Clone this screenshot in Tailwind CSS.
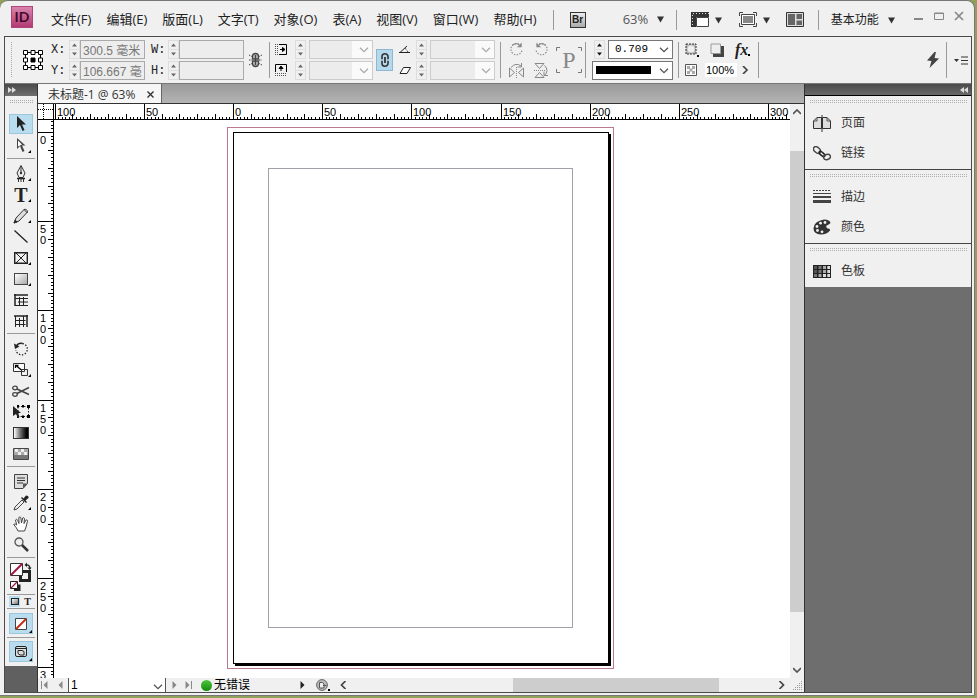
<!DOCTYPE html>
<html lang="zh-CN">
  <head>
    <meta charset="UTF-8" />
    <meta name="viewport" content="width=device-width, initial-scale=1.0" />
    <title>未标题-1 @ 63%</title>
    <script src="https://cdn.jsdelivr.net/npm/@tailwindcss/browser@4"></script>
  </head>
  <body class="h-screen overflow-hidden bg-[#8fa257] pr-0.5 pb-0.5 font-['Liberation_Sans','Noto_Sans_CJK_SC',sans-serif] text-xs text-[#222]">

    <!-- shared glyphs -->
    <svg class="hidden">
      <symbol id="tri-down" viewBox="0 0 8 8"><path d="M0 1h8L4 8z" fill="currentColor" /></symbol>
      <symbol id="chevron" viewBox="0 0 10 6"><path d="M1 .7l4 4 4-4" fill="none" stroke="currentColor" stroke-width="1.3" /></symbol>
      <symbol id="corner" viewBox="0 0 4 4"><path d="M4 0v4H0z" fill="#000" /></symbol>
      <symbol id="rotate" viewBox="0 0 16 16">
        <path d="M10.5 2.2A6 6 0 1 0 14 8" fill="none" stroke="currentColor" stroke-width="1.2" stroke-dasharray="1.5 1.5" />
        <path d="M4 3.3A6 6 0 0 1 11 3" fill="none" stroke="currentColor" stroke-width="1.2" />
        <path d="M13.5.5v5h-5z" fill="currentColor" />
      </symbol>
    </svg>

    <div class="flex h-full flex-col rounded-t-lg border-t border-r border-b border-[#777] bg-[#f0f0f0] pr-0.5 pb-0.5 pl-1">

      <!-- menu bar -->
      <header class="flex h-[35px] shrink-0 items-center pt-0.5 pl-[7px] font-['Open_Sans','Noto_Sans_CJK_SC',sans-serif]">
        <div class="mb-1.5 flex h-[22px] w-[22px] items-center justify-center border border-[#b0457c] bg-linear-to-b from-[#d884ac] to-[#b23a74] font-['Lato',sans-serif] text-sm font-bold text-[#45082a]">ID</div>
        <nav class="ml-[18px] flex gap-[15px] pt-px text-[13px] whitespace-nowrap">
          <button>文件(F)</button>
          <button>编辑(E)</button>
          <button>版面(L)</button>
          <button>文字(T)</button>
          <button>对象(O)</button>
          <button>表(A)</button>
          <button>视图(V)</button>
          <button>窗口(W)</button>
          <button>帮助(H)</button>
        </nav>
        <div class="ml-4 h-5 w-px bg-[#999]"></div>
        <button class="ml-4 h-4 w-4 border border-[#333] bg-linear-to-b from-[#eee] to-[#aaa] font-['Liberation_Sans',sans-serif] text-[10px] leading-3 font-bold" aria-label="Bridge">Br</button>
        <label class="relative ml-[37px] flex items-center text-[#555]">
          <select aria-label="缩放" class="w-[41px] appearance-none text-[13px]"><option>63%</option></select>
          <svg class="pointer-events-none absolute right-0 h-2 w-[7px] text-[#333]"><use href="#tri-down" /></svg>
        </label>
        <div class="ml-3 h-5 w-px bg-[#999]"></div>
        <button class="ml-3.5 flex items-center gap-1.5 text-[#333]" aria-label="视图选项">
          <svg width="18" height="15" viewBox="0 0 18 15"><path d="M0 0h18v5H5v10H0z" fill="#333" /><path d="M5.500 5.500h12v9h-12z" fill="#fff" stroke="#444" /><path d="M2 1.500h16M1.500 3v12" stroke="#ddd" stroke-dasharray="1 2" /></svg>
          <svg class="h-2 w-[7px]"><use href="#tri-down" /></svg>
        </button>
        <button class="ml-[17px] flex items-center gap-1.5 text-[#333]" aria-label="屏幕模式">
          <svg width="18" height="15" viewBox="0 0 18 15" fill="none" stroke="#444"><path d="M.5 4V.5H4M14 .5h3.500V4M17.500 11v3.500H14M4 14.500H.5V11" /><path d="M2.500 2.500h13v10h-13z" fill="#fff" /><path d="M4 4h10v7H4z" fill="#888" stroke="none" /></svg>
          <svg class="h-2 w-[7px]"><use href="#tri-down" /></svg>
        </button>
        <button class="ml-4" aria-label="排列文档">
          <svg width="18" height="15" viewBox="0 0 18 15"><path d="M.5.500h17v14H.5z" fill="#ddd" stroke="#333" /><path d="M2 2h7v11H2zM10.500 2H16v5h-5.500zM10.500 8.500H16V13h-5.500z" fill="#666" /></svg>
        </button>
        <div class="ml-3.5 h-5 w-px bg-[#999]"></div>
        <label class="relative ml-3 flex items-center">
          <select aria-label="工作区" class="w-16 appearance-none"><option>基本功能</option></select>
          <svg class="pointer-events-none absolute right-0 h-2 w-[7px] text-[#333]"><use href="#tri-down" /></svg>
        </label>
        <div class="mr-2 mb-2 ml-auto flex items-center gap-2.5">
          <button aria-label="最小化"><svg width="10" height="10"><path d="M0 8h9" stroke="#888" stroke-width="2" /></svg></button>
          <button aria-label="最大化"><svg width="10" height="10"><path d="M.5 2h9v6.500h-9zM0 2.500h10" fill="none" stroke="#888" /></svg></button>
          <button aria-label="关闭"><svg width="10" height="10"><path d="M1 1l8 8M9 1L1 9" stroke="#888" stroke-width="1.700" /></svg></button>
        </div>
      </header>

      <div class="flex min-h-0 flex-1 flex-col border border-[#4a4a4a]">

        <!-- control panel -->
        <section class="flex h-[47px] shrink-0 items-center border-b border-[#777] pl-[5px]">
          <div class="h-9 w-[3px] bg-[conic-gradient(#aaa_25%,transparent_0)] bg-[length:2px_2px]"></div>
          <svg class="ml-2.5 shrink-0" width="20" height="20" viewBox="0 0 20 20" fill="#fff" stroke="#000">
            <path d="M2.500 2.500h15v15h-15z" />
            <path d="M.5.500h4v4h-4zM8 .5h4v4H8zM15.500.500h4v4h-4zM.5 8h4v4h-4zM15.500 8h4v4h-4zM.5 15.500h4v4h-4zM8 15.500h4v4H8zM15.500 15.500h4v4h-4z" />
            <path d="M8 8h4v4H8z" fill="#000" />
          </svg>

          <div class="ml-2 grid grid-cols-[18px_auto_auto] items-center gap-y-0.5">
            <label for="pos-x" class="font-['Liberation_Mono',monospace]">X:</label>
            <span data-spin="#666"></span>
            <input id="pos-x" value="300.5 毫米" disabled class="h-[19px] w-[65px] border border-[#aaa] bg-[#ededed] pl-0.5 text-[#777]" />
            <label for="pos-y" class="font-['Liberation_Mono',monospace]">Y:</label>
            <span data-spin="#666"></span>
            <input id="pos-y" value="106.667 毫" disabled class="h-[19px] w-[65px] border border-[#aaa] bg-[#ededed] pl-0.5 text-[#777]" />
          </div>
          <div class="ml-1.5 grid grid-cols-[17px_auto_auto] items-center gap-y-0.5">
            <label for="size-w" class="font-['Liberation_Mono',monospace]">W:</label>
            <span data-spin="#666"></span>
            <input id="size-w" disabled class="h-[19px] w-[65px] border border-[#aaa] bg-[#ededed]" />
            <label for="size-h" class="font-['Liberation_Mono',monospace]">H:</label>
            <span data-spin="#666"></span>
            <input id="size-h" disabled class="h-[19px] w-[65px] border border-[#aaa] bg-[#ededed]" />
          </div>
          <button class="ml-[5px]" aria-label="约束宽高比例">
            <svg width="13" height="16" viewBox="0 0 13 16" fill="none" stroke="#444"><path d="M3.500 7V4.500a3 3 0 0 1 6 0V7zM3.500 9v2.500a3 3 0 0 0 6 0V9z" fill="#bbb" stroke-width="1.300" /><path d="M6.500 3v10" stroke-width="1.300" /><path d="M0 3l3 1.500M13 3l-3 1.500M0 8h3M10 8h3M0 13l3-1.500M13 13l-3-1.500" stroke-dasharray="1.500 1" /></svg>
          </button>
          <div class="ml-[7px] h-9 w-px bg-[#999]"></div>

          <div class="ml-1 flex flex-col gap-2">
            <svg width="14" height="13" viewBox="0 0 14 13" fill="none" stroke="#000"><path d="M5 1.500h7.500v10H5M6 6.500h3" /><path d="M8.500 4.500l2.500 2-2.500 2z" fill="#000" /><path d="M1.500 1v11M3.500 1v11" stroke="#555" stroke-dasharray="1 1" /></svg>
            <svg width="14" height="13" viewBox="0 0 14 13" fill="none" stroke="#000"><path d="M1.500 8V.500h11V8M7 7V3" /><path d="M5 4.500L7 2l2 2.500z" fill="#000" /><path d="M1 9.500h12M1 11.500h12" stroke="#555" stroke-dasharray="1 1" /></svg>
          </div>
          <div class="ml-[7px] grid grid-cols-[auto_auto] items-center gap-x-[3px] gap-y-0.5">
            <span data-spin="#666"></span>
            <label class="relative text-[#aaa]"><select disabled aria-label="X 缩放" class="block h-[19px] w-[64px] appearance-none border border-[#ccc] bg-[linear-gradient(90deg,#ececec_42px,#fafafa_42px)] opacity-100"></select><svg class="pointer-events-none absolute top-[7px] right-1 h-1.5 w-2.5"><use href="#chevron" /></svg></label>
            <span data-spin="#666"></span>
            <label class="relative text-[#aaa]"><select disabled aria-label="Y 缩放" class="block h-[19px] w-[64px] appearance-none border border-[#ccc] bg-[linear-gradient(90deg,#ececec_42px,#fafafa_42px)] opacity-100"></select><svg class="pointer-events-none absolute top-[7px] right-1 h-1.5 w-2.5"><use href="#chevron" /></svg></label>
          </div>
          <button class="ml-[3px] flex h-[22px] w-[17px] items-center justify-center border border-[#8fb9d2] bg-[#b5d8ec]" aria-label="约束缩放比例">
            <svg width="8" height="14" viewBox="0 0 8 14" fill="none" stroke="#333"><path d="M1 6.300V3.500a3 2.700 0 0 1 6 0v2.800M1 7.700v2.800a3 2.700 0 0 0 6 0V7.700" stroke-width="1.600" /><path d="M4 4v6" stroke-width="1.800" /></svg>
          </button>
          <div class="ml-1.5 flex flex-col gap-3 text-[#222]">
            <svg width="11" height="9" viewBox="0 0 11 9" fill="none" stroke="#222"><path d="M1 7.500L8 1M0 7.500h11" /><path d="M6 3l3 4" stroke-dasharray="1 1" /></svg>
            <svg width="12" height="9" viewBox="0 0 12 9"><path d="M1 7.500L4.500 1.500h7L8 7.500z" fill="#fff" stroke="#222" /></svg>
          </div>
          <div class="ml-[5px] grid grid-cols-[auto_auto] items-center gap-x-[3px] gap-y-0.5">
            <span data-spin="#666"></span>
            <label class="relative text-[#aaa]"><select disabled aria-label="旋转角度" class="block h-[19px] w-[65px] appearance-none border border-[#ccc] bg-[linear-gradient(90deg,#ececec_44px,#fafafa_44px)] opacity-100"></select><svg class="pointer-events-none absolute top-[7px] right-1 h-1.5 w-2.5"><use href="#chevron" /></svg></label>
            <span data-spin="#666"></span>
            <label class="relative text-[#aaa]"><select disabled aria-label="切变角度" class="block h-[19px] w-[65px] appearance-none border border-[#ccc] bg-[linear-gradient(90deg,#ececec_44px,#fafafa_44px)] opacity-100"></select><svg class="pointer-events-none absolute top-[7px] right-1 h-1.5 w-2.5"><use href="#chevron" /></svg></label>
          </div>
          <div class="ml-[5px] h-9 w-px bg-[#999]"></div>

          <div class="ml-2 grid grid-cols-2 gap-x-2.5 gap-y-1.5 text-[#888]">
            <button aria-label="顺时针旋转"><svg class="h-[15px] w-[15px]"><use href="#rotate" /></svg></button>
            <button aria-label="逆时针旋转"><svg class="h-[15px] w-[15px] -scale-x-100"><use href="#rotate" /></svg></button>
            <button aria-label="水平翻转"><svg width="15" height="15" viewBox="0 0 15 15" fill="none" stroke="#888"><path d="M.5 5v9l5-4.500zM14.500 5v9l-5-4.500z" /><path d="M7.500 4v11" stroke-dasharray="1 1" /><path d="M2 4.500Q7-1 12 3M12.500 0v4h-4" /></svg></button>
            <button aria-label="垂直翻转"><svg width="15" height="15" viewBox="0 0 15 15" fill="none" stroke="#888"><path d="M1 .5h9L5.500 5.500zM1 14.500h9l-4.500-5z" /><path d="M0 7.500h11" stroke-dasharray="1 1" /><path d="M10.500 2.500q5 5 0 10M14 12.500h-4v-4" /></svg></button>
          </div>
          <div class="relative ml-[7px] flex h-[26px] w-[26px] items-center justify-center font-['Liberation_Serif',serif] text-2xl text-[#888]">
            P
            <svg class="absolute inset-0" width="26" height="26" fill="none" stroke="#777"><path d="M.5 4V.5H4M22 .5h3.500V4M25.500 22v3.500H22M4 25.500H.5V22" /></svg>
          </div>
          <div class="ml-[3px] h-9 w-px bg-[#999]"></div>

          <div class="ml-1.5 flex flex-col gap-0.5">
            <div class="flex justify-between gap-[3px] pl-0.5">
              <span data-spin="#111"></span>
              <label class="relative text-[#555]"><select aria-label="描边粗细" class="block h-[19px] w-[65px] appearance-none border border-[#777] bg-white pl-1.5 font-['Liberation_Mono',monospace] text-[11px] text-black"><option>0.709</option></select><svg class="pointer-events-none absolute top-[7px] right-1 h-1.5 w-2.5"><use href="#chevron" /></svg></label>
            </div>
            <label class="relative text-[#555]">
              <select aria-label="描边样式" class="block h-[19px] w-[81px] appearance-none border border-[#777] bg-white"></select>
              <span class="pointer-events-none absolute top-[5px] left-1 h-2 w-[55px] bg-black"></span>
              <svg class="pointer-events-none absolute top-[7px] right-1 h-1.5 w-2.5"><use href="#chevron" /></svg>
            </label>
          </div>
          <div class="ml-[5px] h-9 w-px bg-[#999]"></div>

          <div class="ml-1.5 flex flex-col gap-1">
            <div class="flex h-4 items-center gap-[11px]">
              <button aria-label="对象样式"><svg width="14" height="14" viewBox="0 0 14 14"><path d="M1 1h10v10H1z" fill="#bbb" stroke="#333" stroke-dasharray="2 1" /><circle cx="6" cy="6" r="3.500" fill="#eee" /><path d="M12 12h2v2h-2z" /></svg></button>
              <button aria-label="投影"><svg width="14" height="14" viewBox="0 0 14 14"><path d="M3 3h11v11H3z" fill="#444" /><path d="M1 1h9.500v9.500H1z" fill="#eee" stroke="#999" /></svg></button>
              <button class="flex items-end font-['Liberation_Serif',serif] text-base leading-4 font-bold italic" aria-label="效果">fx<span class="mb-0.5 h-0.5 w-0.5 bg-black"></span></button>
            </div>
            <div class="flex h-4 items-center">
              <svg width="12" height="12" viewBox="0 0 12 12"><path d="M.5.500h11v11H.5z" fill="#fff" stroke="#555" /><path d="M2 2h3v3H2zM7 2h3v3H7zM4.500 4.500h3v3h-3zM2 7h3v3H2zM7 7h3v3H7z" fill="#aaa" /></svg>
              <input aria-label="不透明度" value="100%" class="ml-2 w-8 bg-white pl-px text-[11px] text-black" />
              <button class="ml-1" aria-label="不透明度选项"><svg width="8" height="8"><path d="M2 0l4 4-4 4" fill="none" stroke="#444" stroke-width="1.700" /></svg></button>
            </div>
          </div>
          <div class="ml-2 h-9 w-px bg-[#999]"></div>

          <div class="mr-[3px] ml-auto flex items-center gap-[7px]">
            <button aria-label="快速应用"><svg width="12" height="16" viewBox="0 0 12 16"><path d="M7.500 0L0 8.500l4.500.5L2.500 16 12 6.500l-4.500-.5L9 0z" fill="#444" /></svg></button>
            <div class="h-9 w-px bg-[#999]"></div>
            <button aria-label="面板菜单"><svg width="14" height="9" viewBox="0 0 14 9"><path d="M0 3h5L2.500 6zM7 .500h7v1H7zM7 4h7v1H7zM7 7.500h7v1H7z" fill="#333" /></svg></button>
          </div>
        </section>

        <main class="flex min-h-0 flex-1">

          <!-- tools -->
          <aside class="flex w-[33px] shrink-0 flex-col border-r border-[#333] bg-[#606060]">
            <div class="flex h-3 shrink-0 items-center bg-linear-to-b from-[#4a4a4a] to-[#707070] pl-[3px]"><svg width="8" height="6"><path d="M0 0l4 3-4 3zM4 0l4 3-4 3z" fill="#ddd" /></svg></div>
            <div class="flex flex-col items-center bg-[#f0f0f0] pt-1 pb-1">
              <div class="mb-2.5 h-1 w-6 bg-[conic-gradient(#aaa_25%,transparent_0)] bg-[length:2px_2px]"></div>

              <button class="relative flex h-5 w-6 items-center justify-center border border-[#9cc6de] bg-[#b9dcef]" aria-label="选择"><svg width="10" height="16" viewBox="0 0 10 16"><path d="M1 0v12l3-3 2.500 6 2-1L6 8.500h4z" fill="#222" /></svg></button>
              <button class="relative flex h-[22px] w-6 items-center justify-center" aria-label="直接选择"><svg width="10" height="16" viewBox="0 0 10 16"><path d="M1 1v11l3-3 2.500 6 2-1L6 8.500h3.500z" fill="#444" /><path d="M2 3.500v6L6 7.500z" fill="#fff" /></svg><svg class="absolute right-0.5 bottom-[3px] h-[3px] w-[3px]"><use href="#corner" /></svg></button>

              <div class="mt-0.5 mb-1 h-px w-7 bg-[#999]"></div>
              <button class="relative flex h-[21px] w-6 items-center justify-center" aria-label="钢笔"><svg width="10" height="17" viewBox="0 0 10 17"><path d="M5 .5L9 8l-2 4.500H3L1 8z" fill="#eee" stroke="#333" /><path d="M5 1v6" stroke="#333" /><circle cx="5" cy="8" r="1.200" fill="#333" /><path d="M1 13.500h8" stroke="#222" stroke-width="1.500" /><path d="M2.500 14v3M5 14v3M7.500 14v3" stroke="#333" /></svg><svg class="absolute right-0.5 bottom-[3px] h-[3px] w-[3px]"><use href="#corner" /></svg></button>
              <button class="relative flex h-[21px] w-6 items-center justify-center font-['Liberation_Serif',serif] text-xl leading-5 font-bold" aria-label="文字">T<svg class="absolute right-0.5 bottom-[3px] h-[3px] w-[3px]"><use href="#corner" /></svg></button>
              <button class="relative flex h-[21px] w-6 items-center justify-center" aria-label="铅笔"><svg width="16" height="16" viewBox="0 0 16 16"><path d="M1 15l2-5L11 1.500q3-1 3.500 2.500L6 13z" fill="#ddd" stroke="#333" /><path d="M1 15l1.200-3 2 2zM11 1.500L14.500 5" fill="#222" stroke="#333" /></svg><svg class="absolute right-0.5 bottom-[3px] h-[3px] w-[3px]"><use href="#corner" /></svg></button>
              <button class="relative flex h-[21px] w-6 items-center justify-center" aria-label="直线"><svg width="14" height="13"><path d="M.5.500l13 12" stroke="#222" stroke-width="1.300" /></svg></button>
              <button class="relative flex h-[21px] w-6 items-center justify-center" aria-label="矩形框架"><svg width="14" height="12" viewBox="0 0 14 12" fill="none" stroke="#222"><path d="M.7.700h12.600v10.600H.7z" stroke-width="1.400" /><path d="M2 1l10 10M12 1L2 11" /></svg><svg class="absolute right-0.5 bottom-[3px] h-[3px] w-[3px]"><use href="#corner" /></svg></button>
              <button class="relative flex h-[21px] w-6 items-center justify-center" aria-label="矩形"><span class="h-3 w-3.5 border border-[#444] bg-linear-to-br from-white to-[#aaa]"></span><svg class="absolute right-0.5 bottom-[3px] h-[3px] w-[3px]"><use href="#corner" /></svg></button>
              <button class="relative flex h-[21px] w-6 items-center justify-center" aria-label="水平网格"><svg width="14" height="12" viewBox="0 0 14 12" fill="none" stroke="#222"><path d="M1 0v12M0 1h14" stroke-width="1.500" /><path d="M1 4.500h13M4 8h10M1 11.500h13M5.500 3v8.500M9.500 3v8.500" /></svg></button>
              <button class="relative flex h-[21px] w-6 items-center justify-center" aria-label="垂直网格"><svg width="14" height="12" viewBox="0 0 14 12" fill="none" stroke="#222"><path d="M0 1h14M13 0v12" stroke-width="1.500" /><path d="M1.500 1v11M5.500 3v9M9.500 1v11M1.500 5.500h10M1.500 9.500h10" /></svg></button>

              <div class="mt-0.5 mb-1 h-px w-7 bg-[#999]"></div>
              <button class="relative flex h-[21px] w-6 items-center justify-center" aria-label="旋转"><svg width="15" height="15" viewBox="0 0 15 15" fill="none" stroke="#222" stroke-width="1.300"><path d="M8.500 2.500A5.700 5.700 0 1 1 2 9" stroke-dasharray="1.400 1.600" /><path d="M2.500 5q2-3.500 6-2.500" stroke-width="1.600" /><path d="M0 2.500l1 5.500 4.500-2.500z" fill="#222" stroke="none" /></svg></button>
              <button class="relative flex h-[21px] w-6 items-center justify-center" aria-label="缩放"><svg width="16" height="13" viewBox="0 0 16 13" fill="none" stroke="#333"><path d="M.5.500h11v8H.5z" fill="#fff" /><path d="M3 2.500l6 5M2.500 5V2.500h3" stroke="#000" stroke-width="1.300" /><path d="M8.500 6.500h6v6h-6z" /></svg><svg class="absolute right-0.5 bottom-[3px] h-[3px] w-[3px]"><use href="#corner" /></svg></button>
              <button class="relative flex h-[21px] w-6 items-center justify-center" aria-label="剪刀"><svg width="18" height="12" viewBox="0 0 18 12" fill="none" stroke="#444"><ellipse cx="3" cy="3" rx="2.300" ry="1.800" stroke-width="1.300" /><ellipse cx="3" cy="9.500" rx="2.300" ry="1.800" stroke-width="1.300" /><path d="M5 4l12 5.500M5 8.500l12-6" stroke-width="1.500" /></svg></button>
              <button class="relative flex h-[21px] w-6 items-center justify-center" aria-label="自由变换"><svg width="17" height="13" viewBox="0 0 17 13"><path d="M5 1.500h10.500v10H5z" fill="none" stroke="#222" stroke-dasharray="1.500 1.500" /><path d="M4 0h2v2.500H4zM14 0h3v3h-3zM14 10h3v3h-3zM4 10h2v3H4zM9 0h2v2.500H9zM9 10.500h2V13H9z" /><path d="M0 1v10l3-2 2 4 1.500-1L5 8h3z" fill="#222" /></svg></button>
              <button class="relative flex h-[21px] w-6 items-center justify-center" aria-label="渐变色板"><span class="h-3 w-4 border border-[#333] bg-linear-to-r from-white to-black"></span></button>
              <button class="relative flex h-[21px] w-6 items-center justify-center" aria-label="渐变羽化"><svg width="16" height="12" viewBox="0 0 16 12"><path d="M.5.500h15v11H.5z" fill="#aaa" stroke="#444" /><path d="M2 1h3v3H2zM8 1h3v3H8zM5 4h3v3H5zM11 4h3v3h-3z" fill="#eee" /><path d="M1 7h14v4H1z" fill="#777" /></svg></button>

              <div class="mt-0.5 mb-1 h-px w-7 bg-[#999]"></div>
              <button class="relative flex h-[21px] w-6 items-center justify-center" aria-label="附注"><svg width="14" height="15" viewBox="0 0 14 15"><path d="M.5.500h13v9l-4.500 5H.5z" fill="#ddd" stroke="#444" /><path d="M3 4h8M3 6.500h8M3 9h6" stroke="#333" /><path d="M13.500 9.500H9v5z" fill="#555" /></svg></button>
              <button class="relative flex h-[21px] w-6 items-center justify-center" aria-label="吸管"><svg width="16" height="16" viewBox="0 0 16 16"><path d="M1 15l1-3 7-7 2 2-7 7z" fill="#eee" stroke="#444" /><path d="M8 3l5 5 1-1-1.500-1.500L15.500 3q.5-2.500-2.500-2.500L10.500 3.500 9 2z" fill="#222" /></svg><svg class="absolute right-0.5 bottom-[3px] h-[3px] w-[3px]"><use href="#corner" /></svg></button>
              <button class="relative flex h-[21px] w-6 items-center justify-center" aria-label="抓手"><svg width="16" height="16" viewBox="0 0 16 16"><path d="M5 15q-1-3-4.300-6.500 1.300-1.500 3 .5L2.500 4q1.300-1.500 2.200.3L6 7.500 5.800 1.500q1.300-1.300 2 0L8.500 7l1.200-5q1.500-.8 1.800.5L11 7.500l2.200-3.700q1.500 0 1.300 1.500L13 11l-1.500 4z" fill="#fff" stroke="#444" /></svg></button>
              <button class="relative flex h-[21px] w-6 items-center justify-center" aria-label="缩放显示"><svg width="15" height="15" viewBox="0 0 15 15"><circle cx="5" cy="5" r="4" fill="#eee" stroke="#555" stroke-width="1.300" /><path d="M8 8l6 6" stroke="#333" stroke-width="2.500" /></svg></button>

              <div class="mt-0.5 mb-1 h-px w-7 bg-[#999]"></div>
              <button class="flex h-[31px] w-6 justify-center" aria-label="填色和描边">
                <svg class="shrink-0" width="22" height="30" viewBox="0 0 22 30" fill="none">
                  <path d="M10.500 9.500h9v9h-9z" stroke="#222" stroke-width="3" />
                  <path d="M.5 1.500h12v12H.5z" fill="#fff" stroke="#333" /><path d="M1 13L12 2" stroke="#a01840" stroke-width="2" />
                  <path d="M16 3q4-.5 4 4" stroke="#222" stroke-width="1.300" /><path d="M17.500 5.500h4L19.700 8zM17 .5v4.500L14.500 3z" fill="#222" />
                  <path d="M4 22.500h6.500v6.500H4z" fill="#222" /><path d="M.5 19.500h7v7h-7z" fill="#fff" stroke="#222" /><path d="M1 26l6-6" stroke="#a01840" stroke-width="1.300" />
                </svg>
              </button>
              <div class="mt-px h-px w-7 bg-[#999]"></div>
              <div class="flex h-[13px] w-6 items-center gap-0.5">
                <button class="flex h-[11px] w-3 items-center justify-center bg-[#b9dcef]" aria-label="格式针对容器"><span class="h-[7px] w-2 border border-[#222] bg-linear-to-br from-white to-[#777]"></span></button>
                <button class="w-3 font-['Liberation_Serif',serif] text-[10px] leading-3 font-bold" aria-label="格式针对文本">T</button>
              </div>
              <div class="mb-1 h-px w-7 bg-[#999]"></div>
              <button class="relative flex h-[21px] w-6 items-center justify-center border border-[#9cc6de] bg-[#b9dcef]" aria-label="应用无"><svg width="12" height="12"><path d="M.5.500h11v11H.5z" fill="#fff" stroke="#444" /><path d="M1 11L11 1" stroke="#c03018" stroke-width="2" /></svg><svg class="absolute right-0 bottom-0 h-[3px] w-[3px]"><use href="#corner" /></svg></button>
              <div class="my-[3px] h-px w-7 bg-[#999]"></div>
              <button class="relative flex h-[21px] w-6 items-center justify-center border border-[#9cc6de] bg-[#b9dcef]" aria-label="屏幕模式"><svg width="12" height="11" viewBox="0 0 12 11" fill="none" stroke="#222"><rect x=".5" y=".5" width="11" height="10" rx="1.500" fill="#ddd" /><path d="M1 2.500h10" /><path d="M3 4.500h4l2 1V9H5L3 7.500z" /></svg><svg class="absolute right-0 bottom-0 h-[3px] w-[3px]"><use href="#corner" /></svg></button>
            </div>
          </aside>

          <!-- document window -->
          <section class="flex min-w-0 flex-1 flex-col">
            <div class="flex h-5 shrink-0 border-b border-[#333] bg-linear-to-b from-[#9a9a9a] to-[#b4b4b4]">
              <div class="flex items-center gap-3 border-r border-[#666] bg-[#f6f6f6] pt-0.5 pr-[7px] pl-2.5 text-[#333]">
                <span class="font-['Open_Sans','Noto_Sans_CJK_SC',sans-serif] whitespace-nowrap">未标题-1 @ 63%</span>
                <button aria-label="关闭文档"><svg width="7" height="7"><path d="M.5.500l6 6M6.500.500l-6 6" stroke="#333" stroke-width="1.400" /></svg></button>
              </div>
            </div>

            <div class="flex min-h-0 flex-1">
              <div class="flex w-4 shrink-0 flex-col border-r border-black bg-white">
                <svg class="h-4 w-full shrink-0 border-b border-black" stroke="#000" stroke-dasharray="1 1"><path d="M0 5.500h16M5.500 0v16" /></svg>
                <svg id="ruler-y" class="min-h-0 w-full flex-1 text-[11px]" shape-rendering="crispEdges"></svg>
              </div>
              <div class="flex min-w-0 flex-1 flex-col bg-white">
                <svg id="ruler-x" class="h-4 w-full shrink-0 border-b border-black text-[11px]" shape-rendering="crispEdges"></svg>
                <div class="min-h-0 flex-1 overflow-hidden pt-[7px] pl-[173px]">
                  <div class="w-[387px] border border-[#b87a8c] pt-1 pr-1 pb-1 pl-[5px]">
                    <div class="h-[532px] w-[376px] border border-black bg-white py-[35px] pr-[35px] pl-[34px] shadow-[2px_2px_0_#000]">
                      <div class="h-full border border-[#a0a0a8]"></div>
                    </div>
                  </div>
                </div>
              </div>
              <div class="flex w-3.5 shrink-0 flex-col items-center bg-[#f0f0f0] py-[5px] text-[#555]">
                <button class="h-1.5" aria-label="向上滚动"><svg width="8" height="6"><path d="M0 5l4-4 4 4" fill="none" stroke="currentColor" stroke-width="1.700" /></svg></button>
                <div class="mt-9 mb-[55px] min-h-0 w-full flex-1 bg-[#cdcdcd]"></div>
                <button class="h-1.5" aria-label="向下滚动"><svg width="8" height="6"><path d="M0 1l4 4 4-4" fill="none" stroke="currentColor" stroke-width="1.700" /></svg></button>
              </div>
            </div>

            <!-- status bar -->
            <footer class="flex h-3.5 shrink-0 items-center bg-[#f0f0f0] pl-0.5">
              <button aria-label="第一页"><svg width="8" height="8"><path d="M1.500 0v8" stroke="#888" /><path d="M7.500 0v8l-4-4z" fill="#888" /></svg></button>
              <button class="ml-2.5" aria-label="上一页"><svg width="5" height="8"><path d="M4.500 0v8L.5 4z" fill="#888" /></svg></button>
              <label class="relative ml-[5px] text-[#555]"><select aria-label="页码" class="block h-3.5 w-[98px] appearance-none border-x border-[#555] bg-white pl-0.5 leading-3 text-black"><option>1</option></select><svg class="pointer-events-none absolute right-[3px] bottom-0.5 h-1.5 w-2.5"><use href="#chevron" /></svg></label>
              <button class="ml-1.5" aria-label="下一页"><svg width="5" height="8"><path d="M.5 0v8l4-4z" fill="#888" /></svg></button>
              <button class="ml-2" aria-label="最后一页"><svg width="8" height="8"><path d="M.5 0v8l4-4z" fill="#888" /><path d="M6.500 0v8" stroke="#888" /></svg></button>
              <span class="ml-2 h-[11px] w-[11px] rounded-full bg-linear-to-b from-[#4cc83c] to-[#128a08]"></span>
              <span class="ml-0.5 leading-3 whitespace-nowrap text-black">无错误</span>
              <button class="ml-[50px]" aria-label="印前检查菜单"><svg width="5" height="8"><path d="M.5 0v8l4-4z" fill="#222" /></svg></button>
              <button class="ml-[11px]" aria-label="文档状态"><svg width="14" height="12" viewBox="0 0 14 12"><circle cx="6" cy="6" r="5.400" fill="#bbb" stroke="#666" /><path d="M3.500 3.500h3l1.500 1.500v4H3.500z" fill="#eee" stroke="#555" /><path d="M7 6.500h3.500" stroke="#555" /><path d="M12 10h2v2h-2z" /></svg></button>
              <button class="ml-2.5" aria-label="向左滚动"><svg width="7" height="8"><path d="M5.500 0l-4 4 4 4" fill="none" stroke="#444" stroke-width="1.700" /></svg></button>
              <div class="mr-[59px] ml-[166px] h-full flex-1 bg-[#cdcdcd]"></div>
              <button class="mr-2" aria-label="向右滚动"><svg width="7" height="8"><path d="M1.500 0l4 4-4 4" fill="none" stroke="#444" stroke-width="1.700" /></svg></button>
              <svg class="mr-0.5" width="9" height="9" fill="#999"><path d="M8 0h1v1H8zM6 2h1v1H6zM8 2h1v1H8zM4 4h1v1H4zM6 4h1v1H6zM8 4h1v1H8zM2 6h1v1H2zM4 6h1v1H4zM6 6h1v1H6zM8 6h1v1H8zM0 8h1v1H0zM2 8h1v1H2zM4 8h1v1H4zM6 8h1v1H6zM8 8h1v1H8z" /></svg>
            </footer>
          </section>

          <!-- collapsed panels -->
          <aside class="w-[167px] shrink-0 border-l border-[#333] bg-[#6e6e6e] text-[#333]">
            <div class="flex h-3 items-center justify-end border-b border-black bg-linear-to-b from-[#4a4a4a] to-[#6a6a6a] pr-[3px]"><svg width="8" height="6"><path d="M4 0L0 3l4 3zM8 0L4 3l4 3z" fill="#ddd" /></svg></div>
            <div class="border-b border-[#444] bg-[#f0f0f0] pb-px">
              <div class="px-1 py-1"><div class="h-1 bg-[conic-gradient(#b0b0b0_25%,transparent_0)] bg-[length:2px_2px]"></div></div>
              <button class="flex h-[30px] w-full items-center gap-2.5 pl-2">
                <svg width="18" height="17" viewBox="0 0 18 17"><path d="M.5 6L4 2.500h4.500v11h-8zM9.500 2.500H14L17.500 6v7.500h-8z" fill="#ddd" stroke="#333" /><path d="M4 2.500V6H.5M14 2.500V6h3.500" fill="none" stroke="#555" /><path d="M9 0v17" stroke="#333" /></svg>
                页面
              </button>
              <button class="flex h-[30px] w-full items-center gap-2.5 pl-2">
                <svg width="18" height="15" viewBox="0 0 18 15" fill="none" stroke="#444" stroke-width="1.500"><ellipse cx="4" cy="4" rx="4" ry="2.600" transform="rotate(40 4 4)" /><ellipse cx="9" cy="8" rx="3.500" ry="1.500" transform="rotate(40 9 8)" stroke="#222" /><ellipse cx="14" cy="11" rx="3.500" ry="2.500" transform="rotate(-15 14 11)" /></svg>
                链接
              </button>
            </div>
            <div class="border-b border-[#444] bg-[#f0f0f0] pb-px">
              <div class="px-1 py-1"><div class="h-1 bg-[conic-gradient(#b0b0b0_25%,transparent_0)] bg-[length:2px_2px]"></div></div>
              <button class="flex h-[30px] w-full items-center gap-2.5 pl-2">
                <svg width="18" height="14" viewBox="0 0 18 14" stroke="#444"><path d="M0 .5h18" stroke-dasharray="2 1" /><path d="M0 3.500h18" /><path d="M0 7h18" stroke-width="2" /><path d="M0 11.500h18" stroke-width="3" /></svg>
                描边
              </button>
              <button class="flex h-[30px] w-full items-center gap-2.5 pl-2">
                <svg width="18" height="16" viewBox="0 0 18 16"><path d="M11 .5q6 0 6.500 3.500-1.500 1.500-4 2.500-1 2 1 3 3-.5 2.500 2Q14 15.500 8 15.500.5 15 .5 9.500 1 2 11 .5z" fill="#333" /><g fill="#f0f0f0"><circle cx="12" cy="3.500" r="1.400" /><circle cx="7.500" cy="4.200" r="1.400" /><circle cx="4" cy="7.500" r="1.400" /><circle cx="4.500" cy="11.500" r="1.400" /><circle cx="9" cy="12.800" r="1.400" /></g></svg>
                颜色
              </button>
            </div>
            <div class="bg-[#f0f0f0] pb-px">
              <div class="px-1 py-1"><div class="h-1 bg-[conic-gradient(#b0b0b0_25%,transparent_0)] bg-[length:2px_2px]"></div></div>
              <button class="flex h-[30px] w-full items-center gap-2.5 pl-2">
                <svg width="18" height="13" viewBox="0 0 18 13"><path d="M0 0h18v13H0z" fill="#222" /><path d="M1 1h3v3H1zM1 5h3v3H1z" fill="#555" /><path d="M5.500 1h3v3h-3zM5.500 5h3v3h-3zM1 9h3v3H1z" fill="#777" /><path d="M10 1h3v3h-3zM10 5h3v3h-3zM5.500 9h3v3h-3z" fill="#aaa" /><path d="M14.300 1h2.700v3h-2.700zM14.300 5h2.700v3h-2.700zM10 9h3v3h-3zM14.300 9h2.700v3h-2.700z" fill="#ddd" /></svg>
                色板
              </button>
            </div>
          </aside>
        </main>
      </div>
    </div>

    <script>
      // up / down steppers beside the number fields
      document.querySelectorAll("[data-spin]").forEach((el) => {
        const color = el.dataset.spin
        el.innerHTML = `
          <span class="flex h-[19px] w-[11px] flex-col border border-[#ddd]">
            <button class="flex flex-1 items-center justify-center" aria-label="增加"><svg width="5" height="4"><path d="M0 3.500h5L2.500 .5z" fill="${color}" /></svg></button>
            <button class="flex flex-1 items-center justify-center border-t border-[#ddd]" aria-label="减少"><svg width="5" height="4"><path d="M0 .5h5L2.500 3.500z" fill="${color}" /></svg></button>
          </span>`
      })

      // rulers, in millimetres at 63%
      const PX_PER_MM = 1.784
      const rulerX = document.getElementById("ruler-x")
      const rulerY = document.getElementById("ruler-y")
      const originX = 179
      const originY = 12

      let x = ""
      for (let mm = -100; mm <= 310; mm += 2) {
        const px = Math.round(originX + mm * PX_PER_MM)
        const size = mm % 50 === 0 ? 15 : mm % 10 === 0 ? 5 : 2
        x += `<rect x="${px}" y="${15 - size}" width="1" height="${size}" />`
        if (mm % 50 === 0) x += `<text x="${px + 2}" y="12">${Math.abs(mm)}</text>`
      }
      rulerX.innerHTML = x

      // digits are stacked, only the first one of the last label is in view
      const LAST_LABEL = 300
      let y = ""
      for (let mm = -6; mm <= 320; mm += 2) {
        const px = Math.round(originY + mm * PX_PER_MM)
        const size = mm % 50 === 0 ? 15 : mm % 10 === 0 ? 5 : 2
        y += `<rect x="${15 - size}" y="${px}" width="${size}" height="1" />`
        if (mm % 50 === 0) {
          const digits = mm === LAST_LABEL ? ["3"] : String(mm).split("")
          digits.forEach((digit, i) => {
            y += `<text x="2" y="${px + 12 + i * 11}">${digit}</text>`
          })
        }
      }
      rulerY.innerHTML = y
    </script>
  </body>
</html>
